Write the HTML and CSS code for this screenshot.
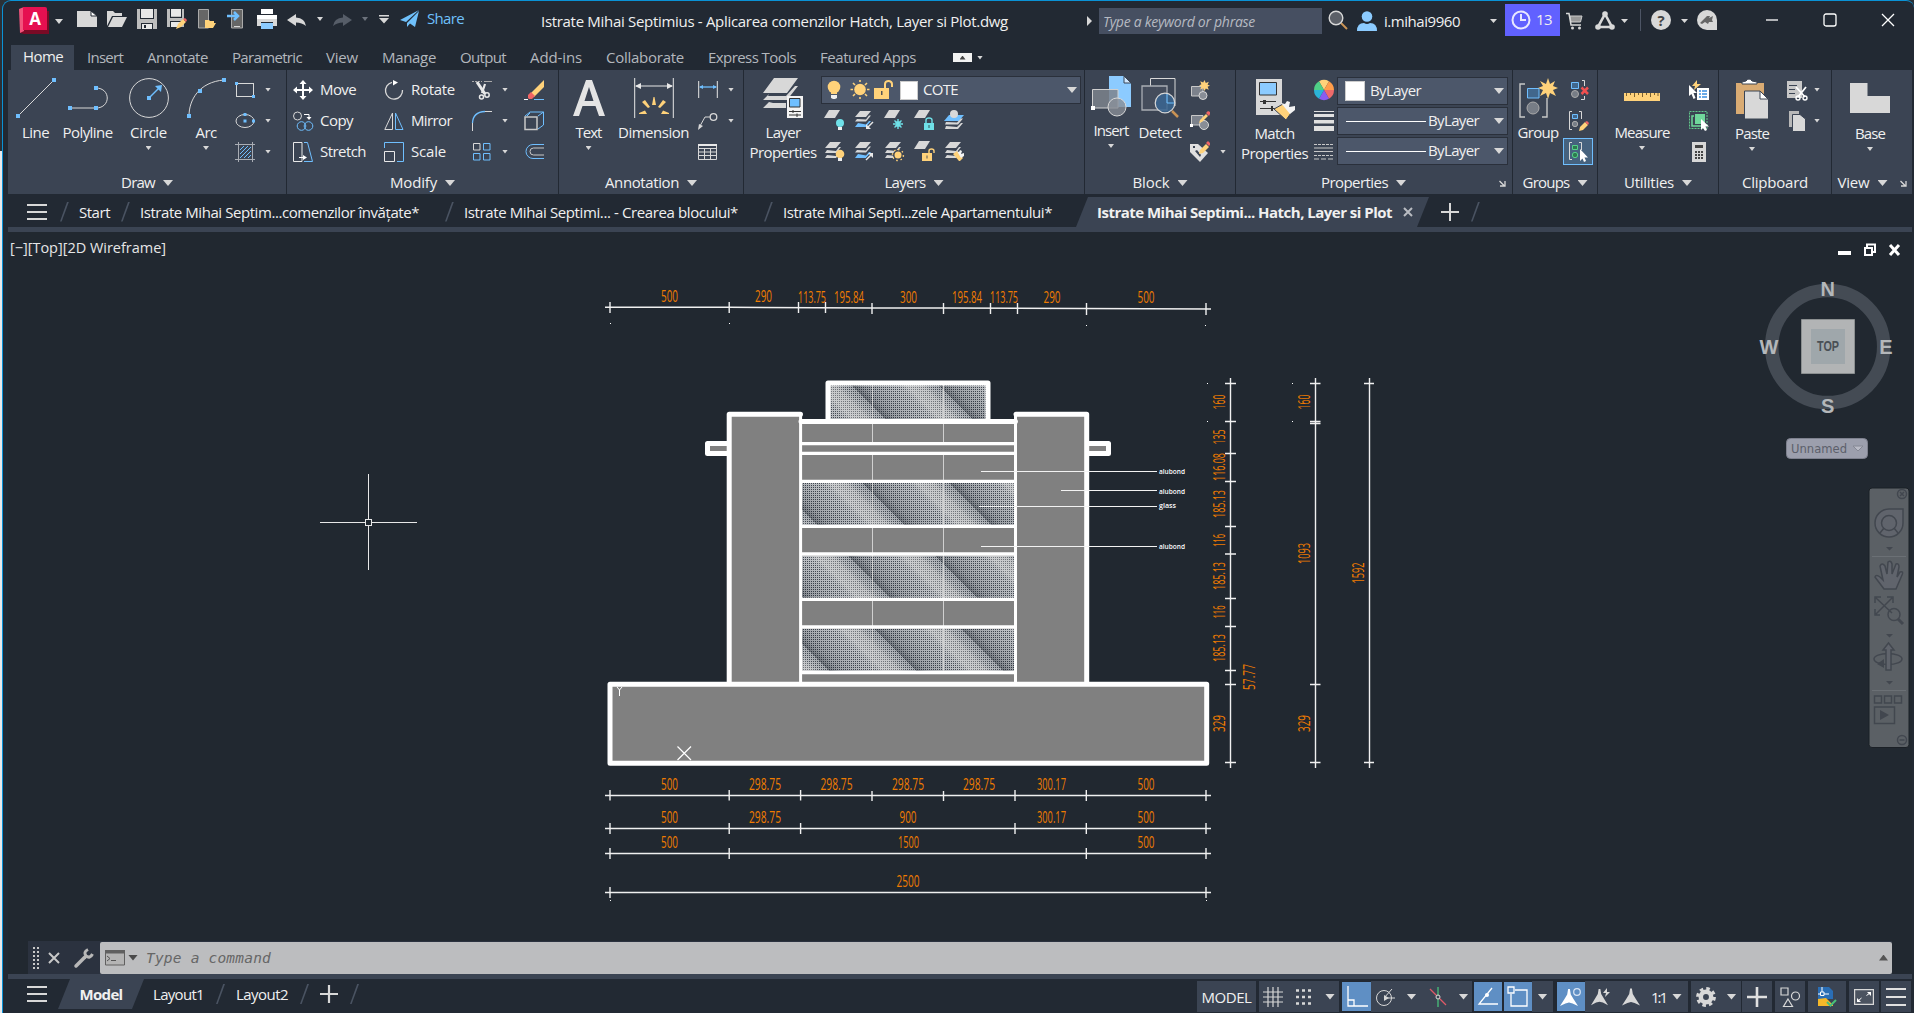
FILE: index.html
```html
<!DOCTYPE html>
<html lang="en">
<head>
<meta charset="utf-8">
<title>Drawing editor</title>
<link rel="stylesheet" href="styles.css">
</head>
<body>
<svg class="defs" width="0" height="0">
  <symbol id="sheet" viewBox="0 0 16 8"><path d="M5 0H16L11 8H0Z"/></symbol>
  <symbol id="stack" viewBox="0 0 20 20"><path fill="#d8d8d8" d="M6 1H17L12 7H1ZM3 9l-2 3H12l5-6h-2l-3 4ZM3 14l-2 3H12l5-6h-2l-3 4Z"/></symbol>
  <symbol id="stackblue" viewBox="0 0 20 20"><path fill="#d8d8d8" d="M6 1H17L12 7H1ZM3 9l-2 2.500H12l5-6h-2l-3 4Z"/><path fill="#6fbfff" d="M4 13l-3 4H12l5-6h-2l-3 3.500Z"/></symbol>
  <symbol id="compass" viewBox="0 0 20 20"><path d="M9 0h2l1 6 3 5 5 8-6-3-4-1-4 1-6 3 5-8 3-5Z"/></symbol>
</svg>
<div class="window">
  <header class="titlebar">
    <div class="logo">
      <svg width="30" height="28" viewBox="0 0 30 28"><path fill="#7a0a25" d="M2 4H30V27H5L1 26Z"/><path fill="#f2537c" d="M0 2L5 0V24L1 26Z"/><path fill="#e51050" d="M4 0H26Q28 0 28 2V23H4Z"/></svg>
      <b>A</b>
    </div>
    <i class="car logo-car"></i>
    <div class="qat">
      <svg width="20" height="20"><path fill="#d8d8d8" d="M0 2H14L20 7V18H0Z"/><path fill="#fff" d="M14 2L20 7H14Z" stroke="#222933"/></svg>
      <svg width="20" height="20"><path fill="#d8d8d8" d="M0 17V2H6L8 4H15V7H5Z"/><path fill="#d8d8d8" d="M6 8H20L15 18H1Z"/></svg>
      <svg width="20" height="20"><path fill="#bdbdbd" d="M0 0H20V20H0Z"/><path fill="#222933" d="M3 0H4V9H16V0H17V10H3ZM4 14H16V20H4Z"/><path fill="#e8e8e8" d="M4 0H16V9H4ZM5 15H15V20H5Z"/><path fill="#222933" d="M7 16H9V19H7Z"/></svg>
      <svg width="20" height="20"><path fill="#bdbdbd" d="M0 0H17V18H0Z"/><path fill="#222933" d="M3 0H4V8H14V0H15V9H3ZM3 12H14V18H3Z"/><path fill="#e8e8e8" d="M4 0H14V7H4ZM4 13H13V18H4Z"/><path fill="#ffd27a" d="M9 20L11 15 16 10 19 13 14 18Z"/><path fill="#f06464" d="M16 10l3 3 1-2-2-2Z"/></svg>
      <svg width="20" height="20"><path fill="#666" stroke="#aaa" d="M1.500.5H11.500V19H1.500Z"/><path fill="#ffd27a" d="M8 19V11H12L13 12H17V14H19L16 19Z"/></svg>
      <svg width="20" height="20"><path fill="#666" stroke="#aaa" d="M4.500.5H15.500V19H4.500Z"/><path fill="#d8d8d8" d="M7 17h6v1H7Z"/><path stroke="#6fbfff" stroke-width="2.500" fill="none" d="M0 7H10M7 3L11 7 7 11"/></svg>
      <svg width="20" height="20"><path fill="#fff" d="M4 0H16V5H4Z"/><path fill="#d8d8d8" d="M0 6H20V17H16V13H4V17H0Z"/><path fill="#fff" d="M0 6H20V10H0Z"/><path fill="#8ccbff" d="M4 14H16V20H4Z"/></svg>
      <svg width="20" height="20"><path fill="#d8d8d8" d="M0 11L9 5V8.500Q18 9 19 17Q15 13.500 9 13.500V17Z"/></svg>
      <i class="car"></i>
      <svg width="20" height="20"><path fill="#565d68" d="M20 11L11 5V8.500Q2 9 1 17Q5 13.500 11 13.500V17Z"/></svg>
      <i class="car dim"></i>
      <svg class="cust" width="10" height="10"><path fill="#d8d8d8" d="M0 1H10V2.500H0ZM0 4H10L5 9.500Z"/></svg>
      <svg class="plane" width="20" height="18"><path fill="#6fc0fb" d="M0 10L19 0 6 12ZM7 13L19 1 15 17 10 13.500 7 17Z"/></svg>
      <span class="share" data-w="37">Share</span>
    </div>
    <div class="doc"><span data-w="467">Istrate Mihai Septimius - Aplicarea comenzilor Hatch, Layer si Plot.dwg</span></div>
    <svg class="go" width="6" height="10"><path fill="#d8d8d8" d="M0 0L5 5 0 10Z"/></svg>
    <div class="search"><span data-w="152">Type a keyword or phrase</span></div>
    <svg class="mag" width="20" height="20"><path stroke="#c99355" stroke-width="2" d="M13 13L19 19"/><circle cx="8" cy="8" r="6.800" fill="#5c6068" stroke="#d8d8d8" stroke-width="1.400"/></svg>
    <svg class="user" width="20" height="20"><circle cx="10" cy="5.500" r="5.300" fill="#8ccbff"/><path fill="#8ccbff" d="M0 20Q0 12 7 12Q10 14 13 12Q20 12 20 20Z"/></svg>
    <span class="name" data-w="76">i.mihai9960</span>
    <i class="car name-car"></i>
    <div class="trial"><svg width="20" height="20"><circle cx="10" cy="10" r="8.500" fill="none" stroke="#e8e8ff" stroke-width="2"/><path d="M10 4V10H15" fill="none" stroke="#e8e8ff" stroke-width="2"/></svg><span data-w="16">13</span></div>
    <svg class="cart" width="18" height="18"><path fill="#999" stroke="#ccc" d="M4 4H16L14.500 10H5Z"/><path fill="none" stroke="#d8d8d8" stroke-width="1.500" d="M0 1.500H3L5 13H15"/><circle cx="6.500" cy="16" r="1.500" fill="#d8d8d8"/><circle cx="13.500" cy="16" r="1.500" fill="#d8d8d8"/></svg>
    <svg class="tri" width="20" height="19"><path fill="none" stroke="#d8d8d8" stroke-width="2.600" d="M10 3L17 16H3Z"/><circle cx="10" cy="3" r="2.800" fill="#d8d8d8"/><circle cx="3" cy="16" r="2.800" fill="#d8d8d8"/><circle cx="17" cy="16" r="2.800" fill="#d8d8d8"/></svg>
    <i class="car tri-car"></i>
    <i class="vsep"></i>
    <div class="help">?</div>
    <i class="car help-car"></i>
    <svg class="assist" width="20" height="20"><path fill="#d8d8d8" d="M20 20H10A10 10 0 1 1 20 10Z"/><path fill="#666" d="M3 13L10 6 13 6 12 8 16 6 15 10 16 12 12 12 11 14 8 12 5 14Z"/></svg>
    <div class="wbtns">
      <svg width="14" height="14"><path stroke="#fff" stroke-width="1.300" d="M1 7H13"/></svg>
      <svg width="14" height="14"><rect x="1" y="1" width="12" height="12" rx="2" fill="none" stroke="#fff" stroke-width="1.300"/></svg>
      <svg width="14" height="14"><path stroke="#fff" stroke-width="1.300" d="M1 1L13 13M13 1L1 13"/></svg>
    </div>
  </header>

  <nav class="tabs">
    <span class="tab on"><span data-w="40">Home</span></span>
    <span data-w="36">Insert</span><span data-w="61">Annotate</span><span data-w="70">Parametric</span><span data-w="32">View</span><span data-w="54">Manage</span><span data-w="46">Output</span><span data-w="52">Add-ins</span><span data-w="78">Collaborate</span><span data-w="88">Express Tools</span><span data-w="96">Featured Apps</span>
    <i class="mini"></i><i class="car"></i>
  </nav>

  <section class="ribbon">
    <div class="panel p-draw">
      <div class="body">
        <div class="big w51"><svg width="40" height="40"><path stroke="#d8d8d8" d="M2 38L38 2"/><path fill="#6fbfff" d="M0 36h4v4H0zM36 0h4v4h-4z"/></svg><span data-w="27">Line</span></div>
        <div class="big w54"><svg width="40" height="40"><path fill="none" stroke="#d8d8d8" d="M2 30H28M28 10C43 10 43 30 28 30"/><path fill="#6fbfff" d="M0 28h4v4H0zM26 28h4v4h-4zM26 8h4v4h-4z"/></svg><span data-w="50">Polyline</span></div>
        <div class="big w69"><svg width="40" height="40"><circle cx="20" cy="20" r="19.400" fill="none" stroke="#d8d8d8"/><path stroke="#6fbfff" stroke-width="1.500" d="M20 20L30 10"/><path fill="#6fbfff" d="M18 18h4v4h-4zM26 8L33 7 32 14Z"/></svg><span data-w="37">Circle</span><i class="car"></i></div>
        <div class="big w46"><svg width="40" height="40"><path fill="none" stroke="#d8d8d8" d="M3 38C3 22 13 4 38 2"/><path fill="#6fbfff" d="M1 36h4v4H1zM12 11h4v4h-4zM36 0h4v4h-4z"/></svg><span data-w="21">Arc</span><i class="car"></i></div>
        <div class="col ml7">
          <div class="row"><svg width="20" height="20"><rect x="1.500" y="3.500" width="17" height="13" fill="none" stroke="#d8d8d8"/><path fill="#6fbfff" d="M0 2h3v3H0zM17 15h3v3h-3z"/></svg><i class="car"></i></div>
          <div class="row"><svg width="20" height="20"><ellipse cx="10" cy="10" rx="9" ry="6.500" fill="none" stroke="#d8d8d8"/><path fill="#6fbfff" d="M8.500 8.500h3v3h-3zM17 8.500h3v3h-3zM8.500 2h3v3h-3z"/></svg><i class="car"></i></div>
          <div class="row"><svg width="20" height="20"><path stroke="#a9adb4" d="M3.500 0V20M17.500 0V20M0 2.500H20M0 17.500H20"/><path stroke="#6fbfff" d="M5 8l4-4M5 12l8-8M5 16L16 5M9 16l7-7M13 16l3-3"/></svg><i class="car"></i></div>
        </div>
      </div>
      <div class="ptitle"><span data-w="34">Draw</span><i class="car lg"></i></div>
    </div>

    <div class="panel p-modify">
      <div class="body">
        <div class="col">
          <div class="row"><svg width="20" height="20"><path stroke="#fff" stroke-width="2" d="M10 3V17M3 10H17"/><path fill="#fff" d="M10 0l3.500 4h-7zM10 20l3.500-4h-7zM0 10l4-3.500v7zM20 10l-4-3.500v7z"/></svg><span data-w="36">Move</span></div>
          <div class="row"><svg width="20" height="20"><circle cx="4.500" cy="5" r="4" fill="none" stroke="#d8d8d8"/><g fill="none" stroke="#6fbfff"><circle cx="8.500" cy="15" r="4.300"/><circle cx="15.500" cy="15" r="4.300"/></g><path fill="none" stroke="#fff" d="M11 3.500H16V7"/><path fill="#fff" d="M13.500 6h5L16 9z"/></svg><span data-w="33">Copy</span></div>
          <div class="row"><svg width="20" height="20"><path fill="none" stroke="#e8e8e8" d="M.5.5H9V19.500H.5Z"/><path fill="none" stroke="#6fbfff" d="M11 .5H14.500L19.500 19.500H11"/><path fill="#fff" d="M6 15h4v-2l4 2.500-4 2.500v-2H6z"/></svg><span data-w="46">Stretch</span></div>
        </div>
        <div class="col c2">
          <div class="row"><svg width="20" height="20"><path fill="none" stroke="#d8d8d8" stroke-width="1.300" d="M8 2.300A8.500 8.500 0 1 0 18.500 10"/><path fill="#fff" d="M9 0l5 2.500-5 3z"/></svg><span data-w="44">Rotate</span></div>
          <div class="row"><svg width="20" height="20"><path fill="none" stroke="#d8d8d8" d="M8.500 2V18.500H.8Z"/><path fill="none" stroke="#6fbfff" d="M11.500 2V18.500H19Z"/></svg><span data-w="41">Mirror</span></div>
          <div class="row"><svg width="20" height="20"><path fill="none" stroke="#6fbfff" d="M.5 6V.5H19.500V19.500H13"/><path fill="none" stroke="#e8e8e8" d="M.5 9.500H10.500V19.500H.5Z"/></svg><span data-w="35">Scale</span></div>
        </div>
        <div class="col">
          <div class="row"><svg width="20" height="20"><path stroke="#aaa" stroke-dasharray="2 1" d="M0 1.500H10"/><path stroke="#aaa" d="M12 1.500H20"/><path fill="none" stroke="#e8e8e8" stroke-width="3" d="M5 2L13 14"/><path fill="none" stroke="#e8e8e8" stroke-width="2.200" d="M13 4L10 13"/><g fill="none" stroke="#e8e8e8" stroke-width="1.500"><circle cx="9.500" cy="17" r="2"/><circle cx="15" cy="15" r="2.200"/></g></svg><i class="car"></i></div>
          <div class="row"><svg width="20" height="20"><path fill="none" stroke="#d8d8d8" d="M.5 20V12M13 .5H20"/><path fill="none" stroke="#6fbfff" stroke-width="1.300" d="M.5 12Q1 1 13 .5"/></svg><i class="car"></i></div>
          <div class="row"><svg width="20" height="20"><g fill="none" stroke="#6fbfff"><path stroke="#d8d8d8" d="M1.500 1.500h6.500v6.500h-6.500z"/><path d="M11.500 1.500h6.500v6.500h-6.500zM1.500 11.500h6.500v6.500h-6.500zM11.500 11.500h6.500v6.500h-6.500z"/></g></svg><i class="car"></i></div>
        </div>
        <div class="col last">
          <div class="row"><svg width="20" height="20"><path stroke="#fff" d="M0 19.500H4"/><path stroke="#6fbfff" d="M10 19.500H20"/><path fill="#ffd27a" d="M7 13L20 0V7L10 17Z"/><path fill="#f06464" d="M4 18V15L7 12 11 16 8 19H5Z"/></svg></div>
          <div class="row"><svg width="20" height="20"><path fill="none" stroke="#6fbfff" d="M1 5L6 1H19.500L14 5M19.500 1V14L14 18M6 2L3 5"/><path fill="none" stroke="#c8c8c8" stroke-width="1.500" d="M1 6H13V18.500H1Z"/></svg></div>
          <div class="row"><svg width="20" height="20"><path fill="none" stroke="#6fbfff" d="M20 2.500H9A7 7 0 0 0 9 16.500H20"/><path fill="none" stroke="#c8c8c8" d="M20 6H9.500A3.500 3.500 0 0 0 9.500 13H20"/></svg></div>
        </div>
      </div>
      <div class="ptitle"><span data-w="47">Modify</span><i class="car lg"></i></div>
    </div>

    <div class="panel p-annot">
      <div class="body">
        <div class="big w60"><svg width="40" height="40"><path fill="#e4e4e4" fill-rule="evenodd" d="M17 2H23L36 38H30L26.500 28H13.500L10 38H4ZM20 9L15.500 23H24.500Z"/></svg><span data-w="26">Text</span><i class="car"></i></div>
        <div class="big w71"><svg width="40" height="40"><path stroke="#e8e8e8" d="M.7 0V40M39.300 0V40M2 8H38"/><path fill="#e8e8e8" d="M1 8l6-3v6zM39 8l-6-3v6z"/><path fill="#ffd27a" d="M18 27l1.500-8h1L22 27zM8 24l3-2 5 7-2 1zM32 24l-3-2-5 7 2 1zM5 35l6-2.500 2 3.500H5zM35 35l-6-2.500-2 3.500h8z"/></svg><span data-w="71">Dimension</span></div>
        <div class="col">
          <div class="row"><svg width="20" height="20"><path stroke="#e8e8e8" d="M.7 1V18M19.300 1V18"/><path stroke="#6fbfff" stroke-width="1.300" d="M2 7H18"/><path fill="#6fbfff" d="M1 7l4-2v4zM19 7l-4-2v4z"/></svg><i class="car"></i></div>
          <div class="row"><svg width="20" height="20"><path fill="none" stroke="#d8d8d8" d="M2 15L7 6H12"/><circle cx="15.500" cy="6" r="3.300" fill="none" stroke="#d8d8d8" stroke-width="1.300"/><path fill="#d8d8d8" d="M0 19l1-6 4 2z"/></svg><i class="car"></i></div>
          <div class="row"><svg width="20" height="20"><path fill="none" stroke="#d8d8d8" d="M.5 2.500H18.500V17.500H.5ZM.5 6.500H18.500M.5 10H18.500M.5 13.500H18.500M6.500 6V18M12.500 6V18"/><path fill="#e8e8e8" d="M0 2H19V4H0Z"/></svg></div>
        </div>
      </div>
      <div class="ptitle"><span data-w="74">Annotation</span><i class="car lg"></i></div>
    </div>

    <div class="panel p-layers">
      <div class="body">
        <div class="big two w76"><svg width="40" height="40"><path fill="#d8d8d8" d="M11 0H35L24 15H0ZM6 16L0 22H24L35 8H32L23 18H5ZM6 24L0 30H23V25H10Z"/><path fill="#f4f4f4" d="M24 18H40V40H24Z"/><path fill="#6fbfff" stroke="#333" d="M26.500 20.500H37V29H26.500Z"/><path stroke="#333" d="M26 33.500H38M26 37H38M30 32V35M34 35.500V39"/></svg><span data-w="35">Layer</span><span data-w="67">Properties</span></div>
        <div class="layerbox">
          <div class="combo big-combo"><svg width="20" height="20"><circle cx="8" cy="7" r="6.300" fill="#ffd27a"/><path fill="#ffd27a" d="M5 12h6v2H5z"/><path fill="#eee" d="M5 15h6v3l-2 1H7l-2-1z"/></svg><svg width="20" height="20"><circle cx="10" cy="9.500" r="5.800" fill="#ffd27a"/><path stroke="#ffd27a" stroke-width="1.600" d="M10 0V2M10 17V19M.5 9.500H3M17 9.500H19.500M3 3L5 5M17 3L15 5M3 16L5 14M17 16L15 14"/></svg><svg width="20" height="20"><path fill="#ffd27a" d="M0 8H15V19H0Z"/><path fill="none" stroke="#ffd27a" stroke-width="2" d="M11 8V4A3.500 3 0 0 1 18 4V7"/><path fill="#555" d="M7 11H8.500V15H7Z"/></svg><i class="swatch"></i><span data-w="35">COTE</span><i class="car lg"></i></div>
          <div class="ltools">
            <svg width="20" height="20"><use href="#sheet" width="16" height="8" fill="#d8d8d8"/><circle cx="16" cy="13" r="4" fill="#6fe0e8"/><path fill="#eee" d="M14 17h4v3h-4z"/></svg>
            <svg width="20" height="20"><use href="#stackblue" width="20" height="20"/><path stroke="#3b4453" stroke-width="3" d="M13 18L19 12"/><path stroke="#e8e8e8" stroke-width="1.500" d="M14 17L19 12"/><path fill="#e8e8e8" d="M12 19v-5l5 5z"/></svg>
            <svg width="20" height="20"><use href="#sheet" width="16" height="8" fill="#d8d8d8"/><path stroke="#6fe0e8" stroke-width="1.400" d="M14 9V19M9 14H19M10.500 10.500L17.500 17.500M17.500 10.500L10.500 17.500M11 12h6M11 16h6"/></svg>
            <svg width="20" height="20"><use href="#sheet" width="16" height="8" fill="#d8d8d8"/><path fill="#6fe0e8" d="M10 13H20V20H10Z"/><path fill="none" stroke="#6fe0e8" stroke-width="1.400" d="M12 13V10A3 2 0 0 1 18 10V13"/><path fill="#355" d="M14.500 15h1v3h-1z"/></svg>
            <svg width="20" height="20"><path fill="#6fbfff" d="M5 5H20L15 11H0Z"/><path fill="#d8d8d8" d="M2 12l-1 2.500H14l5-6h-2l-4 4zM2 16l-1 3H14l5-6h-2l-4 4Z"/><circle cx="10" cy="4" r="4" fill="#d8d8d8"/></svg>
            <svg width="20" height="20"><use href="#stack" width="20" height="20"/><circle cx="16" cy="13" r="4.300" fill="#ffd27a"/><path fill="#eee" d="M14 17h4v3h-4z"/></svg>
            <svg width="20" height="20"><use href="#stackblue" width="20" height="20"/><path stroke="#3b4453" stroke-width="3" d="M12 19L19 12"/><path stroke="#e8e8e8" stroke-width="1.500" d="M12 19L18 13"/><path fill="#e8e8e8" d="M19 12v5l-5-5z"/></svg>
            <svg width="20" height="20"><use href="#stack" width="20" height="20"/><circle cx="14" cy="14" r="5" fill="#3b4453"/><circle cx="14" cy="14" r="3.500" fill="#ffd27a"/><path stroke="#ffd27a" stroke-width="1.400" stroke-dasharray="1.500 2.800" fill="none" d="M14 8.500a5.500 5.500 0 1 1-.1 0"/></svg>
            <svg width="20" height="20"><use href="#sheet" width="16" height="8" fill="#d8d8d8"/><path fill="#ffd27a" d="M8 12H18V20H8Z"/><path fill="none" stroke="#ffd27a" stroke-width="1.400" d="M15 12V10A2.500 2 0 0 1 20 10V12"/><path fill="#555" d="M12.500 14.500h1v3h-1z"/></svg>
            <svg width="20" height="20"><use href="#stack" width="20" height="20"/><path fill="#ffd27a" d="M9 13l4-3 6 7-3 3h-1z"/><path fill="#f4f4f4" d="M13 10l2 1 1-2 2 1-1 3 3-1v3l-3 2z"/></svg>
          </div>
        </div>
      </div>
      <div class="ptitle"><span data-w="41">Layers</span><i class="car lg"></i></div>
    </div>

    <div class="panel p-block">
      <div class="body">
        <div class="big up w50"><svg width="40" height="40"><path fill="#8ccbff" d="M18 0H33L40 7V31H18Z"/><path fill="#cfe8ff" stroke="#3b4453" d="M33 0V7H40Z"/><path fill="#7c828c" fill-opacity=".85" stroke="#d0d0d0" d="M1.500 13.500H27V32H1.500Z"/><circle cx="26" cy="31" r="9" fill="#888d96" fill-opacity=".8" stroke="#d8d8d8"/><path fill="#fff" d="M0 30h4v4H0z"/></svg><span data-w="35">Insert</span><i class="car"></i></div>
        <div class="big w48"><svg width="40" height="40"><path fill="none" stroke="#d8d8d8" d="M10.500 8V.5H35V28"/><path fill="#454d5c" stroke="#a9adb4" stroke-width="1.300" d="M2 8H27V32H2Z"/><circle cx="25" cy="25" r="9.800" fill="#3a6590" fill-opacity=".85" stroke="#d8d8d8" stroke-width="1.200"/><path fill="none" stroke="#6fbfff" d="M27 16V25H34"/><path stroke="#c99355" stroke-width="2.500" d="M32 33L38 39"/></svg><span data-w="43">Detect</span></div>
        <div class="col">
          <div class="row"><svg width="20" height="20"><path fill="#7c828c" stroke="#c8c8c8" d="M1.500 6.500H13V16H1.500Z"/><circle cx="13" cy="15.500" r="4" fill="#888d96" stroke="#d8d8d8"/><path fill="#ffd27a" d="M14.500 0l1.300 2.900 3-1.200-1.200 3 2.400.8-2.400 1.300 1.200 3-3-1.200L14.500 11l-1.300-2.800-3 1.200 1.200-3L9 5.500l2.400-1.200-1.200-3 3 1.200Z"/></svg></div>
          <div class="row"><svg width="20" height="20"><path fill="#7c828c" stroke="#c8c8c8" d="M1.500 4.500H13V14H1.500Z"/><circle cx="14" cy="14" r="4.500" fill="#888d96" stroke="#d8d8d8"/><path fill="#fff" d="M0 13h3v3H0z"/><path fill="#ffd27a" d="M9 12l1-3 6-6 2 2-6 6z"/><path fill="#f06464" d="M16 2l2-2 2 1v2l-1 2z"/></svg></div>
          <div class="row"><svg width="20" height="20"><path fill="#e0e0e0" d="M0 2L8 2 18 11 10 20 0 10Z"/><path fill="#3b4453" d="M3 4h2v2H3zM5 9l2-1 4 5-1 2z"/><path fill="#ffd27a" d="M9 12l1-4 6-6 3 3-6 6z"/><path fill="#f06464" d="M16 1l2-2 2 2v2l-1 1z"/></svg><i class="car"></i></div>
        </div>
      </div>
      <div class="ptitle"><span data-w="37">Block</span><i class="car lg"></i></div>
    </div>

    <div class="panel p-props">
      <div class="body">
        <div class="big two dn w76"><svg width="40" height="40"><path fill="#d8d8d8" d="M1 0H27V36H1Z"/><path fill="#8ccbff" stroke="#333" d="M4.500 3.500H21.500V16H4.500Z"/><path stroke="#333" d="M5 22.500H21M5 29.500H21"/><path fill="#333" d="M8 21h3v4H8zM16 27h2v5h-2z"/><path fill="#ffd27a" stroke="#3b4453" d="M19 30L28 25 36 34 31 41Z"/><path fill="#f4f4f4" d="M26 24l4 1 2-3 3 1-1 5 6-1v4l-5 4Z"/></svg><span data-w="40">Match</span><span data-w="67">Properties</span></div>
        <div class="col ml5">
          <div class="row"><svg width="20" height="20" viewBox="-10 -10 20 20"><path fill="#ffd27a" d="M0 0L-5-8.700A10 10 0 0 1 5-8.700Z"/><path fill="#ff9d4a" d="M0 0L5-8.700A10 10 0 0 1 10 0Z"/><path fill="#ef6b6b" d="M0 0H10A10 10 0 0 1 5 8.700Z"/><path fill="#8a5cf0" d="M0 0L5 8.700A10 10 0 0 1-5 8.700Z"/><path fill="#2bb4d8" d="M0 0L-5 8.700A10 10 0 0 1-10 0Z"/><path fill="#4fcf86" d="M0 0H-10A10 10 0 0 1-5-8.700Z"/></svg></div>
          <div class="row"><svg width="20" height="20"><path fill="#e0e0e0" d="M0 0H20V1H0ZM0 3H20V6H0ZM0 9H20V12.500H0ZM0 15H20V20H0Z"/></svg></div>
          <div class="row"><svg width="20" height="20"><path stroke="#c8c8c8" stroke-dasharray="3 1" d="M0 2.500H19M0 13.500H19"/><path stroke="#c8c8c8" d="M0 6H19M0 9.500H19"/><path stroke="#c8c8c8" stroke-dasharray="5 2" d="M0 17H19"/></svg></div>
        </div>
        <div class="combos">
          <div class="combo"><i class="swatch"></i><span data-w="51">ByLayer</span><i class="car lg"></i></div>
          <div class="combo"><i class="rule"></i><span data-w="51">ByLayer</span><i class="car lg"></i></div>
          <div class="combo"><i class="rule"></i><span data-w="51">ByLayer</span><i class="car lg"></i></div>
        </div>
      </div>
      <div class="ptitle"><i class="grow"></i><span data-w="67">Properties</span><i class="car lg"></i><i class="grow"></i><svg class="launch" width="7" height="7"><path stroke="#d8d8d8" stroke-width="1.300" fill="none" d="M.5 1L5 5.500M6 1V6H1"/></svg></div>
    </div>

    <div class="panel p-groups">
      <div class="body">
        <div class="big w50"><svg width="40" height="40"><path fill="none" stroke="#c8c8c8" stroke-width="1.400" d="M7 6H2V39H7M24 39H29V20"/><path fill="#41678c" stroke="#6fbfff" d="M9.500 10.500H21V20H9.500Z"/><circle cx="15" cy="30" r="6" fill="#777d86" stroke="#aaa"/><path fill="#ffd27a" d="M30 0l2 6 5-3-2 5 5 2-5 2 3 6-6-3-2 6-2-6-6 3 3-6-5-2 5-2-3-5 6 3z"/></svg><span data-w="41">Group</span></div>
        <div class="col">
          <div class="row"><svg width="20" height="20"><path fill="#41678c" stroke="#6fbfff" d="M2.500 2.500h7v6h-7z"/><circle cx="6" cy="14" r="3.500" fill="#777d86" stroke="#aaa"/><path fill="none" stroke="#d8d8d8" d="M13 .5H15.500V6M15.500 16V19.500H12"/><path stroke="#f05050" stroke-width="2.500" d="M12.500 7.500L19 14M19 7.500L12.500 14"/></svg></div>
          <div class="row"><svg width="20" height="20"><path fill="none" stroke="#d8d8d8" d="M3 .5H.5V18.500H3M10 .5H12.500V8"/><path fill="#41678c" stroke="#6fbfff" d="M3.500 3.500h5v4h-5z"/><circle cx="6" cy="13" r="2.700" fill="#777d86" stroke="#aaa"/><path fill="#ffd27a" d="M10 20l1-4 5-5 3 3-5 5z"/><path fill="#f06464" d="M16 11l2-1 2 2-1 2z"/></svg></div>
          <div class="row hl"><svg width="20" height="20"><path fill="none" stroke="#d8d8d8" d="M4 .5H1.500V17.500H4M11 .5H13.500V8"/><path fill="#2e7a50" stroke="#55d08a" d="M4.500 3.500h5v4h-5z"/><circle cx="7" cy="13" r="2.700" fill="#2e7a50" stroke="#55d08a"/><path fill="#fff" d="M12 7V19l2.500-2.500 1.500 3.500 2-1-1.500-3.500H20Z"/></svg></div>
        </div>
      </div>
      <div class="ptitle"><span data-w="47">Groups</span><i class="car lg"></i></div>
    </div>

    <div class="panel p-util">
      <div class="body">
        <div class="big w84"><svg width="40" height="40"><path fill="#ffd27a" d="M2 15H38V23H2Z"/><path stroke="#7a6030" d="M4.500 15V18M8.500 15V17M12.500 15V19M16.500 15V17M20.500 15V19M24.500 15V17M28.500 15V19M32.500 15V17M36 15V18"/></svg><span data-w="55">Measure</span><i class="car"></i></div>
        <div class="col">
          <div class="row"><svg width="20" height="20"><path fill="#ffd27a" d="M8 0L3 6H6L5 10 12 4H8Z"/><path fill="#fff" d="M0 5V16l2.500-2 2 5 2-1-2-5H8ZM8 8H20V20H8Z"/><path stroke="#3a8fe0" stroke-width="1.300" d="M10 11H12M13 11H18M10 14H12M13 14H18M10 17H12M13 17H18"/></svg></div>
          <div class="row"><svg width="20" height="20"><path fill="none" stroke="#62c98c" stroke-dasharray="2 1" d="M.5.5H18V17.500H.5Z"/><path fill="#6fd79b" d="M6 3H16V13H6Z"/><path fill="none" stroke="#6fd79b" stroke-width="1.500" d="M5 5H3V15H13"/><path fill="#fff" d="M12 8V19l2-2 2 3 2-1-1.500-3.500H20Z"/></svg></div>
          <div class="row"><svg width="20" height="20"><path fill="#d8d8d8" d="M3 0H17V20H3Z"/><path fill="#444" d="M6 3H14V6H6ZM6 9h2v2H6zM9 9h2v2H9zM12 9h2v2h-2zM6 12h2v2H6zM9 12h2v2H9zM12 12h2v2h-2zM6 15h2v2H6zM9 15h2v2H9zM12 15h2v2h-2z"/></svg></div>
        </div>
      </div>
      <div class="ptitle"><span data-w="50">Utilities</span><i class="car lg"></i></div>
    </div>

    <div class="panel p-clip">
      <div class="body">
        <div class="big dn w60"><svg width="40" height="40"><path fill="#d9ab73" d="M4 4H32V35H4Z"/><path fill="#fff" stroke="#3b4453" d="M10 5V3L14 2Q17-2 20 2L25 3V5Z"/><path fill="#d8d8d8" stroke="#3b4453" d="M12.500 12H28L36.500 20V40H12.500Z"/><path fill="#fff" stroke="#3b4453" d="M28 12V20H36Z"/></svg><span data-w="34">Paste</span><i class="car"></i></div>
        <div class="col">
          <div class="row"><svg width="20" height="20"><path fill="#c8c8c8" d="M0 1H15V18H0Z"/><path stroke="#3b4453" d="M2 5.500H10M2 9.500H8M2 13.500H8"/><path stroke="#fff" stroke-width="1.800" d="M9 7L18 17M19 7L11 17"/><g fill="none" stroke="#fff" stroke-width="1.400"><circle cx="11" cy="18" r="2"/><circle cx="18" cy="18" r="2"/></g></svg><i class="car"></i></div>
          <div class="row"><svg width="20" height="20"><path fill="#b8b8b8" d="M2 0H12V16H2Z"/><path fill="#d8d8d8" stroke="#3b4453" d="M5.500 3.500H13L18.500 8V20.500H5.500Z"/></svg><i class="car"></i></div>
        </div>
      </div>
      <div class="ptitle"><span data-w="66">Clipboard</span></div>
    </div>

    <div class="panel p-view">
      <div class="body">
        <div class="big dn w78"><svg width="40" height="40"><path fill="#d8d8d8" d="M0 4H17.500V17H40V34H0Z"/></svg><span data-w="30">Base</span><i class="car"></i></div>
      </div>
      <div class="ptitle"><span data-w="32">View</span><i class="car lg"></i><svg class="launch" width="7" height="7"><path stroke="#d8d8d8" stroke-width="1.300" fill="none" d="M.5 1L5 5.500M6 1V6H1"/></svg></div>
    </div>
  </section>

  <nav class="files">
    <svg class="burger" width="20" height="16"><path fill="#d8d8d8" d="M0 0H20V2H0ZM0 7H20V9H0ZM0 14H20V16H0Z"/></svg>
    <i class="slash s1"></i><span data-w="31">Start</span>
    <i class="slash s2"></i><span data-w="279">Istrate Mihai Septim...comenzilor învățate*</span>
    <i class="slash s3"></i><span data-w="274">Istrate Mihai Septimi... - Crearea blocului*</span>
    <i class="slash s4"></i><span data-w="269">Istrate Mihai Septi...zele Apartamentului*</span>
    <div class="active"><b data-w="295">Istrate Mihai Septimi... Hatch, Layer si Plot</b><svg width="10" height="10"><path stroke="#b9bcc2" stroke-width="2" d="M1 1L9 9M9 1L1 9"/></svg></div>
    <svg class="plus" width="18" height="18"><path stroke="#d8d8d8" stroke-width="2" d="M9 0V18M0 9H18"/></svg>
    <i class="slash s5"></i>
  </nav>

  <main class="canvas">
    <svg class="drawing" width="1904" height="742" viewBox="8 232 1904 742">
      <defs>
        <pattern id="mesh" width="2" height="2" patternUnits="userSpaceOnUse"><path fill="#c4c7ca" d="M0 0H2V1H0ZM0 1H1V2H0Z"/><path fill="#2d343e" d="M1 1H2V2H1Z"/></pattern>
        <linearGradient id="sheen" gradientUnits="userSpaceOnUse" x1="293" y1="0" x2="336.500" y2="-43.500" spreadMethod="repeat"><stop offset="0" stop-color="#252c36" stop-opacity=".5"/><stop offset=".12" stop-color="#353c46" stop-opacity=".3"/><stop offset=".5" stop-color="#9a9ea5" stop-opacity=".2"/><stop offset=".62" stop-color="#d4d4d4" stop-opacity=".45"/><stop offset=".8" stop-color="#c8c8c8" stop-opacity=".4"/><stop offset=".9" stop-color="#80868e" stop-opacity=".25"/><stop offset="1" stop-color="#59616b" stop-opacity=".3"/></linearGradient>
      </defs>
      <g fill="#808080" stroke="#fff" stroke-width="5" stroke-linejoin="round">
        <path d="M731 443.500H707.500V453.500H731M1085 443.500H1108.500V453.500H1085" />
        <path stroke="none" d="M729 414H801V422H1016V414H1087V684H729Z"/>
      </g>
      <g id="glass">
        <path fill="url(#mesh)" d="M830 385H986V420H830ZM802 483H1014V525H802ZM802 556H1014V598H802ZM802 629H1014V671H802Z"/>
        <path fill="url(#sheen)" d="M830 385H986V420H830ZM802 483H1014V525H802ZM802 556H1014V598H802Z"/>
        <path fill="url(#sheen)" transform="translate(-47 0)" d="M849 629H1061V671H849Z"/>
      </g>
      <path stroke="#d0d0d0" d="M872.500 385V443M943.500 385V443M872.500 454V672M943.500 454V672"/>
      <g fill="none" stroke="#fff" stroke-linejoin="round" stroke-linecap="round">
        <path stroke-width="3" d="M800.600 416V684M1015.500 416V684"/>
        <path stroke-width="3.300" stroke-linecap="butt" d="M801 443.700H1015M801 453.400H1015M801 481.300H1015M801 526.300H1015M801 554H1015M801 599.400H1015M801 627H1015M801 672.500H1015"/>
        <path stroke-width="5" d="M729.200 684V414.200H800.500M1016 414.200H1086.700V684M801 421.500H1015.500M828 419V383H988V419"/>
      </g>
      <rect x="610" y="684.300" width="596.700" height="79" fill="#808080" stroke="#fff" stroke-width="5" stroke-linejoin="round"/>
      <path stroke="#fff" fill="none" d="M619.500 690V696M617 687L619.500 690 622 687"/>
      <path stroke="#fff" stroke-width="1.200" d="M677.500 746.500L691 760M691 746.500L677.500 760"/>
      <path stroke="#f2f2f2" d="M981 471.500H1157M1061 490.500H1157M979 506.500H1157M981 546.500H1157"/>
      <g class="note"><text x="1159" y="473.500" textLength="26">alubond</text><text x="1159" y="493.500" textLength="26">alubond</text><text x="1159" y="508" textLength="17">glass</text><text x="1159" y="549" textLength="26">alubond</text></g>

      <g fill="none" stroke="#f0f0f0" stroke-width="1.400">
        <path d="M605 307.300H729L872 308H944L1211 309"/>
        <path d="M610 302V313M729.200 302V313M798.500 302V313M825.500 302V313M872 303V314M943.500 303V314M990.500 303V314M1017.500 303V314M1086.500 303V315M1206 303V315"/>
        <path d="M605 795.500H1211M605 828.500H1211M605 853.500H1211M605 892.500H1211"/>
        <path d="M610 790V800.500M729.200 790V800.500M800.600 790V800.500M872 791V801M943.500 791V801M1015 790V801M1086.300 790V801M1206 790V801"/>
        <path d="M610 823V834M729.200 823V834M800.600 823V834M1015 823V834M1086.300 823V834M1206 823V834M610 848V859M729.200 848V859M1086.300 848V859M1206 848V859M610 887V898M1206 887V898"/>
        <path d="M1230.500 378V768M1315.500 378V768M1369.500 378V768"/>
        <path d="M1225 383.500H1236M1225 421.500H1236M1225 453.500H1236M1225 481.500H1236M1225 526.500H1236M1225 554H1236M1225 598.500H1236M1225 626.500H1236M1225 670.500H1236M1225 684.500H1236M1225 762.500H1236M1310 383.500H1320.500M1310 421.500H1320.500M1310 423.500H1320.500M1310 684.500H1320.500M1310 762.500H1320.500M1364 383.500H1374M1364 762.500H1374"/>
      </g>
      <path fill="#fff" d="M610 323h1v1h-1zM729 323h1v1h-1zM1086 325h1v1h-1zM1205 325h1v1h-1zM1207 383h1v1h-1zM1207 421h1v1h-1zM1292 383h1v1h-1zM1292 421h1v1h-1zM610 900h1v1h-1zM1206 900h1v1h-1z"/>
      <g class="dim">
        <text x="661" y="302" textLength="17">500</text><text x="755" y="302" textLength="17">290</text><text x="798" y="302.500" textLength="28">113.75</text><text x="834" y="302.500" textLength="30">195.84</text><text x="900" y="303" textLength="17">300</text><text x="952" y="303" textLength="30">195.84</text><text x="990" y="303" textLength="28">113.75</text><text x="1043.500" y="303" textLength="17">290</text><text x="1137.500" y="303" textLength="17">500</text>
        <text x="661" y="790" textLength="17">500</text><text x="749" y="790" textLength="32">298.75</text><text x="820.500" y="790" textLength="32">298.75</text><text x="892" y="790" textLength="32">298.75</text><text x="963" y="790" textLength="32">298.75</text><text x="1037" y="790" textLength="29">300.17</text><text x="1137.500" y="790" textLength="17">500</text>
        <text x="661" y="823" textLength="17">500</text><text x="749" y="823" textLength="32">298.75</text><text x="899.500" y="823" textLength="17">900</text><text x="1037" y="823" textLength="29">300.17</text><text x="1137.500" y="823" textLength="17">500</text>
        <text x="661" y="848" textLength="17">500</text><text x="898" y="848" textLength="21">1500</text><text x="1137.500" y="848" textLength="17">500</text>
        <text x="896.500" y="887" textLength="23">2500</text>
        <g transform="translate(1224.500 0) rotate(-90)"><text x="-409.500" textLength="15">160</text><text x="-444.500" textLength="15">135</text><text x="-481" textLength="28">116.08</text><text x="-518" textLength="28">185.13</text><text x="-547" textLength="13">116</text><text x="-590" textLength="28">185.13</text><text x="-618.500" textLength="13">116</text><text x="-662" textLength="28">185.13</text><text x="-732" textLength="17">329</text><text x="-690" y="30.500" textLength="26">57.77</text></g>
        <g transform="translate(1309.500 0) rotate(-90)"><text x="-409.500" textLength="15">160</text><text x="-564" textLength="21">1093</text><text x="-732" textLength="17">329</text></g>
        <g transform="translate(1363.500 0) rotate(-90)"><text x="-583.500" textLength="21">1592</text></g>
      </g>
      <path stroke="#e8e8e8" d="M320 522.500H365M371 522.500H417M368.500 474V519M368.500 526V570"/><rect x="365.500" y="519.500" width="6" height="6" fill="none" stroke="#e8e8e8"/>
    </svg>
    <div class="vplabel"><span data-w="156">[−][Top][2D Wireframe]</span></div>
    <div class="vpctl">
      <svg width="14" height="14"><path fill="#fff" d="M0 8H13V12H0Z"/></svg>
      <svg width="14" height="14"><path fill="none" stroke="#fff" stroke-width="2" d="M4 4V1.500H12V9H10M2 5H9V12H2Z"/></svg>
      <svg width="14" height="14"><path stroke="#fff" stroke-width="3" d="M2 2L11 12M11 2L2 12"/></svg>
    </div>
    <svg class="cube" width="140" height="180" viewBox="1758 280 140 180">
      <circle cx="1827.700" cy="346.600" r="56" fill="none" stroke="#444b54" stroke-width="13.500"/>
      <path fill="#b2b4b5" stroke="#8b8f90" d="M1801.500 319.500H1854.500V373.500H1801.500Z"/><path fill="#9fa7ab" d="M1811 329H1845V364H1811Z"/>
      <g class="nesw"><text x="1827.700" y="295.500">N</text><text x="1827.700" y="412.500">S</text><text x="1769" y="354">W</text><text x="1886" y="354">E</text></g>
      <text class="top" x="1817" y="351" textLength="22">TOP</text>
      <rect x="1786.500" y="438.500" width="81" height="20" rx="4" fill="#9c9fad" stroke="#7e818e"/><text class="ucs" x="1791" y="453" textLength="56">Unnamed</text><path fill="#b9bbc6" stroke="#858894" d="M1853 446H1863L1858 451Z"/>
    </svg>
    <svg class="navbar" width="42" height="262" viewBox="1868 487 42 262">
      <rect x="1869" y="488" width="40" height="259.500" rx="3" fill="#5b6065" stroke="#1b2026"/>
      <g fill="none" stroke="#42474f" stroke-width="1.500">
        <circle cx="1902" cy="494" r="4.500"/><path d="M1900 492L1904 496M1904 492L1900 496M1899.500 740H1904.500"/><circle cx="1902" cy="740" r="4.500"/>
        <path fill="#60646c" d="M1903 509V523A14 14 0 1 1 1889 509Z"/><circle cx="1889" cy="523" r="7.500"/><path d="M1884 528L1880 533M1894 528L1898 533"/>
        <path fill="#60646c" d="M1884 589L1875 577Q1876 574 1880 577L1883 580 1880 566Q1882 562 1885 566L1887 574 1888 562Q1891 560 1892 564V574L1896 564Q1899 563 1899 567L1897 577 1900 572Q1904 571 1902 575L1896 589Z"/>
        <path d="M1876 598L1892 613M1892 598L1876 614M1875 603V597H1881M1887 597H1893V603M1875 609V615H1880"/><circle cx="1894" cy="614.500" r="6"/><path stroke-width="3" d="M1898 619L1903 624"/>
        <ellipse cx="1888" cy="659" rx="14" ry="5.500"/><path fill="#60646c" d="M1886 670V650H1883L1888.500 643 1894 650H1891V670Z"/>
        <path d="M1874.500 696h7v7h-7zM1884.500 696h7v7h-7zM1894.500 696h7v7h-7zM1874.500 707H1894.500V723.500H1874.500Z"/><path stroke="#6b7075" stroke-width="1" d="M1872 556.500H1906M1872 690.500H1906"/>
      </g>
      <path fill="#42474f" d="M1886 547H1893L1889.500 550.500ZM1886 634H1893L1889.500 637.500ZM1886 681H1893L1889.500 684.500ZM1880 710L1889 715 1880 720ZM1877 664L1884 659V668Z"/>
    </svg>
    <div class="cmd">
      <svg class="grip" width="6" height="22"><path stroke="#c8c8c8" stroke-width="2" stroke-dasharray="2 2" d="M1 0V22M5 0V22"/></svg>
      <svg width="12" height="12"><path stroke="#c8c8c8" stroke-width="2" d="M1 1L11 11M11 1L1 11"/></svg>
      <svg class="wrench" width="20" height="20"><path stroke="#b8b8b8" stroke-width="3.500" stroke-linecap="round" d="M2 18L11 9"/><path fill="none" stroke="#b8b8b8" stroke-width="3" d="M14 1.500Q9 4 12 8Q16 11 18.500 6"/></svg>
      <div class="cmdinput">
        <svg width="20" height="16"><path fill="#b4b4b4" stroke="#606060" d="M.5.5H19.500V15H.5Z"/><path fill="#606060" d="M0 0H20V3.500H0Z"/><path fill="none" stroke="#555" d="M2 6L5 8.500 2 11M6 10.500H11"/></svg><i class="car lg"></i><span data-w="125">Type a command</span><i class="up-car"></i>
      </div>
    </div>
  </main>

  <footer class="status">
    <div class="layouts">
      <svg class="burger" width="20" height="16"><path fill="#d8d8d8" d="M0 0H20V2H0ZM0 7H20V9H0ZM0 14H20V16H0Z"/></svg>
      <div class="model"><b data-w="43">Model</b></div>
      <span data-w="51">Layout1</span><i class="slash"></i><span data-w="52">Layout2</span><i class="slash"></i>
      <svg width="18" height="18"><path stroke="#d8d8d8" stroke-width="2.200" d="M9 0V18M0 9H18"/></svg><i class="slash"></i>
    </div>
    <div class="sb">
      <div class="g g1"><span data-w="50">MODEL</span></div>
      <div class="g g2"><svg width="20" height="20"><path stroke="#d8d8d8" stroke-width="1.200" d="M5 0V20M10 0V20M15 0V20M0 5H20M0 10H20M0 15H20"/></svg><svg width="18" height="20"><path stroke="#d8d8d8" stroke-width="2.600" stroke-dasharray="3 3" d="M1 3.500H16M1 10H16M1 16.500H16"/></svg><i class="car lg"></i></div>
      <div class="g blue g3"><svg width="22" height="22"><path fill="none" stroke="#fff" stroke-width="1.300" d="M2 0V20H22M2 14H8V20"/></svg></div>
      <div class="g g4"><svg width="20" height="20"><circle cx="9" cy="11" r="7.500" fill="none" stroke="#d8d8d8"/><path fill="none" stroke="#d8d8d8" d="M9 11H20M9 11L17 2"/><path fill="#d8d8d8" d="M9 14V8L14 11z"/></svg><i class="car lg"></i><svg width="18" height="20"><path stroke="#e05a68" stroke-width="1.300" d="M1 2L17 18"/><path stroke="#49c07a" stroke-width="1.300" d="M9 0V20"/><circle cx="9" cy="10" r="2" fill="#3b4453" stroke="#ddd"/></svg><i class="car lg"></i></div>
      <div class="g blue g5"><svg width="22" height="22"><path fill="none" stroke="#fff" stroke-width="1.300" d="M15 2L2 18H21"/><circle cx="10" cy="9" r="2" fill="#fff"/></svg></div>
      <div class="g blue g6"><svg width="22" height="22"><path fill="none" stroke="#fff" stroke-width="1.300" d="M8 4H20V20H4V8"/><path fill="none" stroke="#fff" stroke-width="1.300" d="M1 1H7V7H1Z"/></svg></div>
      <div class="g g7"><i class="car lg"></i></div>
      <div class="g blue g8"><svg width="22" height="22"><use href="#compass" x="0" y="2" width="18" height="20" fill="#fff"/><circle cx="17" cy="6" r="3.300" fill="none" stroke="#dbe6f5" stroke-width="1.200"/></svg></div>
      <div class="g g9"><svg width="20" height="20"><use href="#compass" x="0" y="1" width="17" height="19" fill="#d8d8d8"/><path fill="#d8d8d8" d="M16 1L12 6H15L14 10 19 5H16Z"/></svg><svg width="20" height="20"><use href="#compass" x="1" y="1" width="18" height="19" fill="#d8d8d8"/></svg><span data-w="15">1:1</span><i class="car lg"></i></div>
      <div class="g g10"><svg width="20" height="20"><circle cx="10" cy="10" r="5.200" fill="none" stroke="#d8d8d8" stroke-width="4.500"/><circle cx="10" cy="10" r="8.300" fill="none" stroke="#d8d8d8" stroke-width="3.200" stroke-dasharray="3.500 3.020"/></svg><i class="car lg"></i></div>
      <div class="g g11"><svg width="20" height="20"><path stroke="#e0e0e0" stroke-width="2.600" d="M10 0V20M0 10H20"/></svg></div>
      <div class="g g12"><svg width="20" height="20"><g fill="none" stroke="#d8d8d8" stroke-width="1.200"><path d="M1 1H8V8H1ZM8 12L12.500 19.500H3.500Z"/><circle cx="15.500" cy="9" r="4"/></g></svg></div>
      <div class="g g13"><svg width="20" height="20"><path fill="#2a6eb5" d="M1 0H12L16 4V12H1Z"/><path fill="#f5b829" d="M1 12L9 11 16 18V19H1Z"/><path fill="none" stroke="#fff" d="M5 0V8M1 7H12"/><path fill="#2a6eb5" stroke="#fff" d="M3.500 5H7V8.500H3.500Z"/><path fill="none" stroke="#49c07a" stroke-width="2" d="M10 15L13.500 18.500 19 13"/></svg></div>
      <div class="g g14"><svg width="20" height="16"><path fill="#4b5360" stroke="#d8d8d8" stroke-width="1.200" d="M.6.600H19.400V15.400H.6Z"/><path stroke="#fff" d="M4 12L7.500 9M12.500 6.500L16 4"/><path fill="#fff" d="M3 9V13H7ZM13 3H17V7Z"/></svg></div>
      <div class="g g15"><svg width="20" height="20"><path fill="#e0e0e0" d="M0 1H20V3H0ZM0 9H20V11H0ZM0 17H20V19H0Z"/></svg></div>
    </div>
  </footer>
</div>
<script src="fit.js"></script>
</body>
</html>
```
FILE: fit.js
```js
// Tracks every label so that it fills the width reserved for it.
document.querySelectorAll('[data-w]').forEach(function (el) {
  var target = parseFloat(el.dataset.w);
  el.style.display = 'inline-block';
  el.style.whiteSpace = 'nowrap';
  var natural = el.getBoundingClientRect().width;
  var n = el.textContent.length;
  el.style.letterSpacing = ((target - natural) / n).toFixed(3) + 'px';
});
// Drawing texts are condensed, as in the narrow CAD lettering, instead of overlapping.
document.querySelectorAll('text[textLength]').forEach(function (el) {
  el.setAttribute('lengthAdjust', 'spacingAndGlyphs');
});
```
FILE: styles.css
```css
* { box-sizing: border-box; }
html, body { margin: 0; height: 100%; overflow: hidden; }
body { width: 1914px; height: 1013px; background: linear-gradient(#2b3036 0 151px, #e9eaec 151px); font: 15px "Open Sans", "Noto Sans", sans-serif; color: #f0f0f0; }
svg { display: block; flex: none; overflow: visible; }
.defs { position: absolute; }
.window { margin-left: 2px; width: 1912px; height: 1013px; background: #222933; border-top: 1px solid #0a92d6; border-left: 1px solid #0a92d6; border-radius: 9px 8px 0 0; display: flex; flex-direction: column; }
span, b { line-height: 18px; padding-bottom: 2px; white-space: nowrap; flex: none; }

.car { display: block; flex: none; width: 6px; height: 4px; background: #d8d8d8; clip-path: polygon(0 0, 100% 0, 50% 100%); }
.car.lg { width: 10px; height: 6px; }
.car.dim { background: #6c727c; }

/* title bar */
.titlebar { height: 44px; flex: none; display: flex; padding-left: 16px; align-items: flex-start; }
.logo { width: 30px; height: 28px; margin-top: 6px; display: grid; flex: none; }
.logo > * { grid-area: 1 / 1; }
.logo b { font: bold 17px/23px "Open Sans"; text-align: center; padding-left: 2px; color: #fff; }
.logo-car, .name-car, .tri-car, .help-car { margin-top: 18px; width: 7px; }
.logo-car { margin-left: 6px; width: 8px; height: 5px; }
.qat { display: flex; align-items: center; height: 20px; margin: 8px 0 0 14px; gap: 10px; width: 444px; flex: none; }
.qat .cust { margin-left: 1px; }
.qat .plane { margin-left: 1px; }
.qat .share { color: #6fc0fb; margin-left: -3px; }
.qat .car + svg { margin-left: -1px; }
.qat .car + .cust { margin-left: 1px; }
.doc { width: 547px; flex: none; margin: 10px 0 0 20px; }
.go { margin-top: 15px; margin-left: -1px; }
.search { margin: 7px 0 0 6px; width: 223px; height: 26px; background: #464f61; padding: 4px 0 0 4px; font-style: italic; font-size: 14px; color: #b6bac2; flex: none; }
.mag { margin: 9px 0 0 6px; }
.user { margin: 10px 0 0 9px; }
.name { margin: 11px 0 0 7px; }
.name-car { margin-left: 30px; margin-right: 8px; }
.trial { width: 55px; height: 32px; background: #6161ff; margin-top: 3px; display: flex; align-items: center; gap: 5px; padding-left: 6px; flex: none; }
.cart { margin: 11px 0 0 6px; }
.tri { margin: 10px 0 0 11px; }
.tri-car { margin-left: 6px; }
.vsep { width: 1px; height: 22px; background: #4d5565; margin: 8px 0 0 12px; flex: none; }
.help { width: 20px; height: 20px; border-radius: 50%; background: #d8d8d8; color: #444; font: bold 15px/20px "Open Sans"; text-align: center; margin: 9px 0 0 10px; flex: none; }
.help-car { margin-left: 10px; }
.assist { margin: 9px 0 0 9px; }
.wbtns { display: flex; gap: 44px; margin: 12px 0 0 48px; }

/* ribbon tabs */
.tabs { height: 25px; flex: none; display: flex; align-items: center; gap: 24px; padding-left: 8px; color: #b3b7bd; }
.tabs .tab { background: #3b4453; color: #f0f0f0; height: 25px; width: 63px; padding: 2px 0 0 12px; margin-right: -11px; }
.mini { width: 19px; height: 9px; background: #f2f2f2; margin-left: 13px; display: flex; align-items: center; justify-content: center; }
.mini::after { content: ""; width: 6px; height: 4px; background: #444; clip-path: polygon(50% 0, 100% 100%, 0 100%); }
.mini + .car { margin-left: -19px; }

/* ribbon */
.ribbon { height: 124px; flex: none; margin-left: 5px; width: 1904px; background: #3b4453; display: flex; }
.panel { display: flex; flex-direction: column; flex: none; border-left: 1px solid #222933; }
.p-draw { width: 278px; border-left: 0; }
.p-modify { width: 272px; }
.p-annot { width: 185px; }
.p-layers { width: 341px; }
.p-block { width: 151px; }
.p-props { width: 277px; }
.p-groups { width: 85px; }
.p-util { width: 121px; }
.p-clip { width: 113px; }
.p-view { width: 81px; }
.body { height: 102px; display: flex; align-items: flex-start; }
.ptitle { height: 22px; display: flex; align-items: center; justify-content: center; gap: 8px; }
.grow { flex: 1; }
.launch { margin-right: 6px; }
.p-view .launch { margin: 0 0 0 4px; }
.big { display: flex; flex-direction: column; align-items: center; padding-top: 8px; flex: none; }
.big.up { padding-top: 6px; }
.big.dn { padding-top: 9px; }
.big span { margin-top: 5px; }
.big span + span { margin-top: 0; }
.big .car { margin-top: 3px; }
.w46 { width: 46px; } .w48 { width: 48px; } .w50 { width: 50px; } .w51 { width: 51px; } .w54 { width: 54px; } .w60 { width: 60px; } .w69 { width: 69px; } .w71 { width: 71px; } .w76 { width: 76px; } .w78 { width: 78px; } .w84 { width: 84px; }
.col { display: flex; flex-direction: column; padding-top: 4px; flex: none; }
.row { height: 31px; display: flex; align-items: center; flex: none; }
.row .car { margin-left: 10px; }
.row span { margin-left: 7px; }
.ml7 { margin-left: 6px; }
.ml5 { margin-left: 2px; }
.p-draw .body { padding-left: 2px; }
.p-draw .w54 { width: 53px; }
.p-modify .body { padding-left: 6px; }
.p-modify .col:first-child { width: 91px; }
.p-modify .c2 { width: 88px; }
.p-modify .last { margin-left: 16px; }
.p-annot .w60 { width: 59px; }
.p-annot .col { margin-left: 9px; }
.p-layers .big { margin-left: 1px; }
.layerbox { margin: 6px 0 0 0; width: 260px; }
.combo { display: flex; align-items: center; background: #4c576a; border: 1px solid #2a303b; height: 28px; }
.combo .car { margin-left: auto; margin-right: 3px; }
.big-combo { padding-left: 4px; gap: 4px; }
.big-combo .swatch { margin: 0 1px 0 2px; }
.swatch { width: 18px; height: 19px; background: #fff; border: 1px solid #ccc; flex: none; }
.ltools { display: grid; grid-template-columns: repeat(5, 20px); column-gap: 10px; row-gap: 11px; padding: 6px 0 0 3px; }
.p-block .w50 { margin-left: 1px; }
.p-block .col { margin-left: 6px; }
.p-props .big { margin-left: 1px; width: 75px; }
.combos { width: 171px; margin: 7px 0 0 3px; display: flex; flex-direction: column; gap: 2px; }
.combos .swatch { margin: 0 5px 0 7px; width: 20px; height: 20px; }
.rule { width: 80px; height: 1px; background: #fff; margin: 0 2px 0 8px; }
.p-groups .col { margin-left: 1px; width: 32px; }
.p-groups .row { justify-content: center; margin-left: -2px; }
.p-groups .row.hl { width: 30px; height: 27px; margin: 2px 0 0 -1px; background: #46627e; border: 1px solid #6fbfff; }
.p-util .w84 { margin-left: 2px; }
.p-util .col { margin-left: 5px; }
.p-clip .w60 { margin-left: 3px; }
.p-clip .col { margin-left: 5px; }
.p-clip .row .car { margin-left: 7px; }
.p-view .w78 { margin-left: -1px; }

/* drawing tabs */
.files { height: 38px; flex: none; display: flex; align-items: center; margin-left: 5px; width: 1904px; padding-left: 19px; border-bottom: 5px solid #3b4453; }
.files > span { margin-top: 5px; }
.active b { margin-top: 2px; }
.burger { margin-top: 3px; }
.slash { width: 9px; height: 20px; flex: none; background: #4a5362; clip-path: polygon(80% 0, 100% 0, 18% 100%, 0 100%); margin-top: 2px; }
.s1 { margin: 2px 10px 0 13px; }
.s2 { margin: 2px 10px 0 11px; }
.s3 { margin: 2px 10px 0 26px; }
.s4 { margin: 2px 10px 0 26px; }
.active { width: 353px; height: 30px; margin: 3px 0 0 24px; padding-left: 21px; background: #3b4453; clip-path: polygon(12px 0, 100% 0, 341px 100%, 0 100%); display: flex; align-items: center; flex: none; gap: 11px; }
.files .plus { margin: 2px 0 0 12px; }
.s5 { margin: 2px 0 0 12px; }
b { font-weight: 700; }

/* canvas */
.canvas { position: relative; margin-left: 5px; width: 1904px; height: 742px; flex: none; background: #212830; }
.drawing { position: absolute; left: 0; top: 0; }
.dim text { font: 17px "Open Sans", sans-serif; fill: #f07c00; }
.note text { font: 600 7px "Open Sans", sans-serif; fill: #fff; }
.vplabel { position: absolute; left: 2px; top: 6px; color: #e6e6e6; font: 14.500px "Open Sans"; }
.vpctl { position: absolute; left: 1830px; top: 11px; display: flex; gap: 11px; }
.cube { position: absolute; left: 1750px; top: 48px; }
.nesw text { font: bold 20px "Liberation Sans"; fill: #b4b7ba; text-anchor: middle; }
.top { font: bold 14px "Liberation Sans"; fill: #4a5056; }
.ucs { font: 13px "DejaVu Sans"; fill: #5c5f6b; }
.navbar { position: absolute; left: 1860px; top: 255px; }
.cmd { position: absolute; left: 20px; top: 709px; width: 1864px; height: 33px; display: flex; align-items: center; background: #2b323f; padding-left: 5px; }
.cmd > svg + svg { margin-left: 9px; }
.cmd > svg.wrench { margin-left: 14px; }
.cmdinput { margin-left: 6px; flex: 1; height: 32px; background: #bcbdbf; border-radius: 2px; display: flex; align-items: center; padding: 0 4px 0 5px; }
.cmdinput .car { background: #4a4a4a; margin: 0 8px 0 3px; }
.cmdinput span { font: italic 14.500px "DejaVu Sans Mono", monospace; color: #666; padding: 0; }
.up-car { width: 9px; height: 6px; background: #555; clip-path: polygon(50% 0, 100% 100%, 0 100%); margin-left: auto; }

/* status bar */
.status { height: 39px; flex: none; margin-left: 5px; width: 1904px; border-top: 5px solid #3b4453; display: flex; justify-content: space-between; }
.layouts { display: flex; align-items: center; padding-left: 19px; height: 30px; }
.layouts > span, .layouts b, .sb span { margin-top: 2px; }
.layouts .burger { margin: 0; }
.model { width: 86px; height: 30px; margin: 0 9px 0 11px; background: #3b4453; clip-path: polygon(12px 0, 100% 0, 74px 100%, 0 100%); display: flex; align-items: center; justify-content: center; }
.layouts .slash { margin: 0 11px 0 12px; }
.layouts svg + .slash { margin-left: 12px; }
.sb { display: flex; padding-top: 2px; }
.g { height: 31px; background: #3b4453; display: flex; align-items: center; flex: none; justify-content: center; }
.blue { background: #5f8fc4; height: 29px; margin-top: 1px; }
.g1 { width: 59px; margin-right: 3px; }
.g2 { width: 80px; margin-right: 3px; gap: 12px; justify-content: flex-start; padding-left: 4px; }
.g3 { width: 29px; }
.g4 { width: 101px; margin-right: 2px; gap: 12px; }
.g5 { width: 28px; margin-right: 2px; }
.g6 { width: 28px; }
.g7 { width: 21px; margin-right: 4px; }
.g8 { width: 28px; }
.g9 { width: 103px; margin-right: 3px; gap: 10px; }
.g9 .car { margin-left: -4px; }
.g10 { width: 50px; margin-right: 1px; gap: 11px; }
.g11 { width: 30px; margin-right: 3px; }
.g12 { width: 30px; margin-right: 3px; }
.g13 { width: 38px; margin-right: 3px; }
.g14 { width: 30px; margin-right: 2px; }
.g15 { width: 30px; margin-right: 1px; }
```
